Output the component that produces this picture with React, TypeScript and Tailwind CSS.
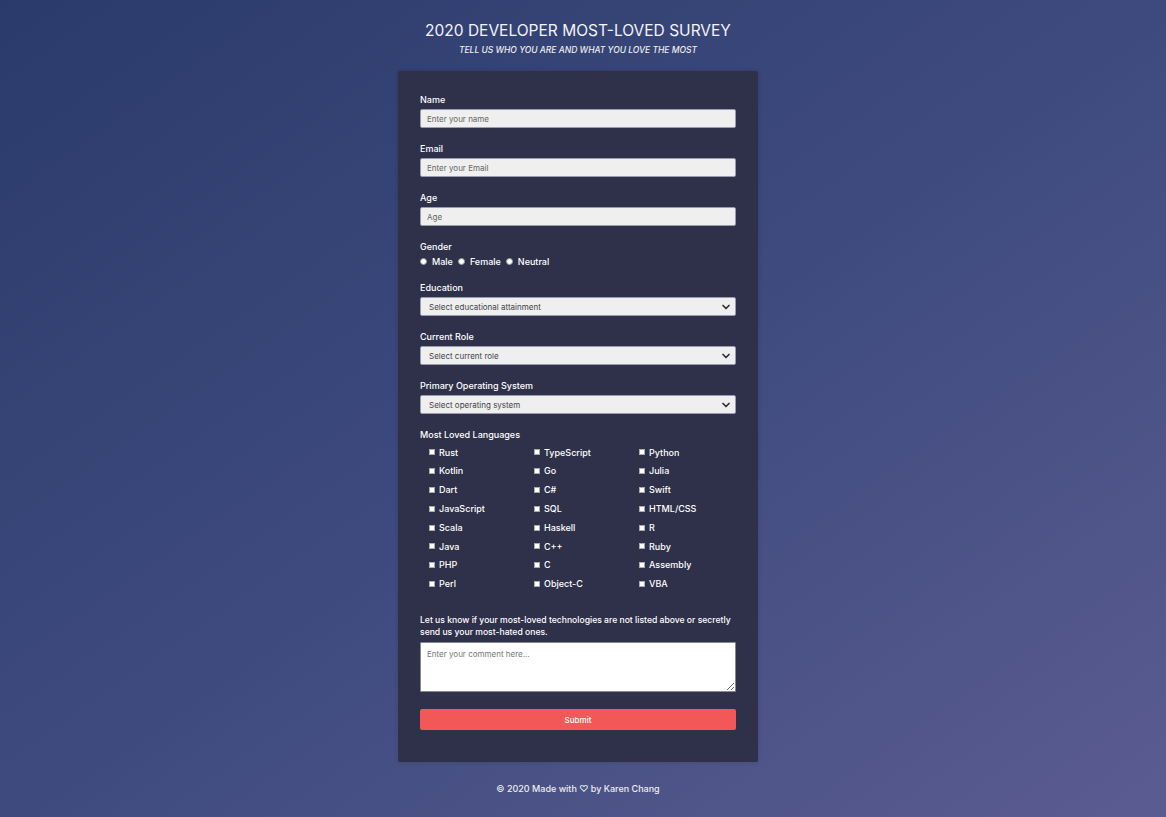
import { ChevronDown } from 'lucide-react';

const languages = [
  ['Rust', 'TypeScript', 'Python'],
  ['Kotlin', 'Go', 'Julia'],
  ['Dart', 'C#', 'Swift'],
  ['JavaScript', 'SQL', 'HTML/CSS'],
  ['Scala', 'Haskell', 'R'],
  ['Java', 'C++', 'Ruby'],
  ['PHP', 'C', 'Assembly'],
  ['Perl', 'Object-C', 'VBA'],
];

function Field({ label, placeholder }: { label: string; placeholder: string }) {
  return (
    <div className="mb-[15px]">
      <label className="block text-[9px] leading-[11px] mb-[4px] font-medium text-white">{label}</label>
      <input
        placeholder={placeholder}
        className="block w-full h-[19px] bg-[#efefef] border border-[#9a9ab0] rounded-[2px] px-[6px] text-[8px] text-[#333] placeholder:text-[#666] outline-none"
      />
    </div>
  );
}

function Select({ label, placeholder }: { label: string; placeholder: string }) {
  return (
    <div className="mb-[15px]">
      <label className="block text-[9px] leading-[11px] mb-[4px] font-medium text-white">{label}</label>
      <div className="relative w-full h-[19px] bg-[#efefef] border border-[#9a9ab0] rounded-[2px] flex items-center px-[8px]">
        <span className="text-[8px] text-[#444]">{placeholder}</span>
        <ChevronDown className="absolute right-[3px] top-[2.5px] w-[12px] h-[12px] text-[#333]" strokeWidth={3.5} />
      </div>
    </div>
  );
}

export default function App() {
  return (
    <div
      className="min-h-screen w-full bg-gradient-to-br from-[#2a3b6b] via-[#3e4a7e] to-[#5b5c91] text-white flex flex-col items-center pr-[10px]"
      style={{ fontFamily: 'Inter, "Noto Sans", sans-serif' }}
    >
      <h1 className="mt-[21px] text-[15.5px] leading-[19px] text-[#f4f4f8]">2020 DEVELOPER MOST-LOVED SURVEY</h1>
      <p className="mt-[5px] text-[8.5px] leading-[11px] italic font-medium text-[#eee]">TELL US WHO YOU ARE AND WHAT YOU LOVE THE MOST</p>

      <form className="mt-[15px] w-[360px] bg-[#2f3049] rounded-[2px] px-[22px] pt-[23px] pb-[32px] shadow-[0_0_4px_rgba(0,0,0,0.15)]">
        <Field label="Name" placeholder="Enter your name" />
        <Field label="Email" placeholder="Enter your Email" />
        <Field label="Age" placeholder="Age" />

        <div className="mb-[15px]">
          <label className="block text-[9px] leading-[11px] mb-[4px] font-medium">Gender</label>
          <div className="flex items-center gap-[5px] text-[9px] leading-[11px] font-medium">
            {['Male', 'Female', 'Neutral'].map((g) => (
              <span key={g} className="flex items-center gap-[5px]">
                <span className="w-[7px] h-[7px] rounded-full bg-white border border-[#999]" />
                {g}
              </span>
            ))}
          </div>
        </div>

        <Select label="Education" placeholder="Select educational attainment" />
        <Select label="Current Role" placeholder="Select current role" />
        <Select label="Primary Operating System" placeholder="Select operating system" />

        <div>
          <label className="block text-[9px] leading-[11px] mb-[3px] font-medium">Most Loved Languages</label>
          <div className="grid grid-cols-[105px_105px_105px] pl-[9px]">
            {languages.flat().map((lang) => (
              <span key={lang} className="flex items-center gap-[4px] h-[18.8px] text-[9px] font-medium">
                <span className="w-[6px] h-[6px] bg-white border border-[#aaa]" />
                {lang}
              </span>
            ))}
          </div>
        </div>

        <p className="mt-[21px] text-[8.6px] leading-[12px] font-medium">
          Let us know if your most-loved technologies are not listed above or secretly send us your most-hated ones.
        </p>
        <textarea
          placeholder="Enter your comment here..."
          className="mt-[4px] block w-full h-[50px] bg-white border border-[#888] rounded-[1px] px-[6px] py-[5px] text-[8px] text-[#333] placeholder:text-[#777] outline-none"
        />

        <button type="button" className="mt-[17px] block w-full h-[21px] bg-[#f25858] rounded-[2px] text-[8px] font-medium text-white">
          Submit
        </button>
      </form>

      <p className="mt-[20px] text-[9px] font-medium text-[#eee]">© 2020 Made with ♡ by Karen Chang</p>
    </div>
  );
}
